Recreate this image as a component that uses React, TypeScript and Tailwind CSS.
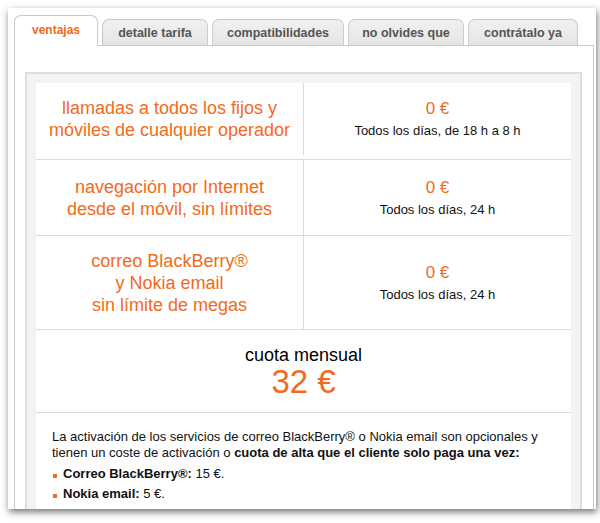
import React from 'react';

type Tarifa = {
  titulo: string[];
  precio: string;
  horario: string;
  alto: string;
};

const tabs = [
  { label: 'ventajas', w: 'w-[84px]' },
  { label: 'detalle tarifa', w: 'w-[106px]' },
  { label: 'compatibilidades', w: 'w-[132px]' },
  { label: 'no olvides que', w: 'w-[116px]' },
  { label: 'contrátalo ya', w: 'w-[110px]' },
];

const tarifas: Tarifa[] = [
  {
    titulo: ['llamadas a todos los fijos y', 'móviles de cualquier operador'],
    precio: '0 €',
    horario: 'Todos los días, de 18 h a 8 h',
    alto: 'h-[77px] pb-[4px]',
  },
  {
    titulo: ['navegación por Internet', 'desde el móvil, sin límites'],
    precio: '0 €',
    horario: 'Todos los días, 24 h',
    alto: 'h-[76px]',
  },
  {
    titulo: ['correo BlackBerry®', 'y Nokia email', 'sin límite de megas'],
    precio: '0 €',
    horario: 'Todos los días, 24 h',
    alto: 'h-[94px]',
  },
];

export default function App() {
  return (
    <div className="w-[600px] h-[523px] bg-white pt-[8px] pl-[8px] overflow-hidden font-['Liberation_Sans',Arial,sans-serif]">
      {/* hoja con sombra */}
      <div className="w-[588px] h-[501px] bg-white shadow-[1px_3px_7px_rgba(0,0,0,0.55)] overflow-hidden pt-[6px] pl-[6px]">
        {/* Pestañas */}
        <div className="flex items-end gap-[4px] h-[31px]">
          {tabs.map((tab, i) =>
            i === 0 ? (
              <div
                key={tab.label}
                className={`${tab.w} h-[31px] -mb-px relative z-10 bg-white border border-b-0 border-[#c9c9c9] rounded-t-[7px] flex items-center justify-center pb-[2px] text-[12px] font-bold text-[#f26a1b]`}
              >
                {tab.label}
              </div>
            ) : (
              <div
                key={tab.label}
                className={`${tab.w} h-[26px] bg-gradient-to-b from-[#f1f1f1] to-[#e5e5e5] border border-b-0 border-[#c9c9c9] rounded-t-[7px] flex items-center justify-center pt-[2px] text-[12.5px] font-bold text-[#555555]`}
              >
                {tab.label}
              </div>
            )
          )}
        </div>

        {/* Panel */}
        <div className="w-[580px] h-[480px] border border-[#c9c9c9] bg-white pt-[26px] pl-[10px] pr-[11px]">
          <div className="w-[557px] border-2 border-b-0 border-[#dddddd] bg-[#f3f3f3] p-[9px] pb-0">
            <div className="bg-white">
              {tarifas.map((t) => (
                <div key={t.horario + t.titulo[0]} className={`flex ${t.alto} border-b border-[#dcdcdc]`}>
                  <div className="w-[267px] flex flex-col items-center justify-center text-center text-[18px] leading-[22px] text-[#f26a1b]">
                    {t.titulo.map((l) => (
                      <span key={l}>{l}</span>
                    ))}
                  </div>
                  <div className="w-px bg-[#dcdcdc]" />
                  <div className="flex-1 flex flex-col items-center justify-center">
                    <span className="text-[17px] leading-[20px] text-[#f26a1b]">{t.precio}</span>
                    <span className="mt-[4px] text-[13px] leading-[16px] text-[#111111]">{t.horario}</span>
                  </div>
                </div>
              ))}

              {/* Cuota mensual */}
              <div className="h-[83px] border-b border-[#dcdcdc] flex flex-col items-center justify-center pt-[2px]">
                <span className="text-[18px] leading-[20px] text-black">cuota mensual</span>
                <span className="text-[33px] leading-[34px] text-[#f26a1b]">32 €</span>
              </div>

              {/* Nota */}
              <div className="px-[16px] pt-[16px] pb-[20px] text-[13px] leading-[16px] text-[#111111]">
                <p>
                  La activación de los servicios de correo BlackBerry® o Nokia email son opcionales y tienen un coste de activación o{' '}
                  <strong>cuota de alta que el cliente solo paga una vez:</strong>
                </p>
                <ul className="mt-[5px] flex flex-col gap-[4px]">
                  <li className="flex items-center gap-[6px]">
                    <span className="w-[4px] h-[4px] bg-[#f26a1b] mt-[3px] ml-px" />
                    <span>
                      <strong>Correo BlackBerry®:</strong> 15 €.
                    </span>
                  </li>
                  <li className="flex items-center gap-[6px]">
                    <span className="w-[4px] h-[4px] bg-[#f26a1b] mt-[3px] ml-px" />
                    <span>
                      <strong>Nokia email:</strong> 5 €.
                    </span>
                  </li>
                </ul>
              </div>
            </div>
          </div>
        </div>
      </div>
    </div>
  );
}
